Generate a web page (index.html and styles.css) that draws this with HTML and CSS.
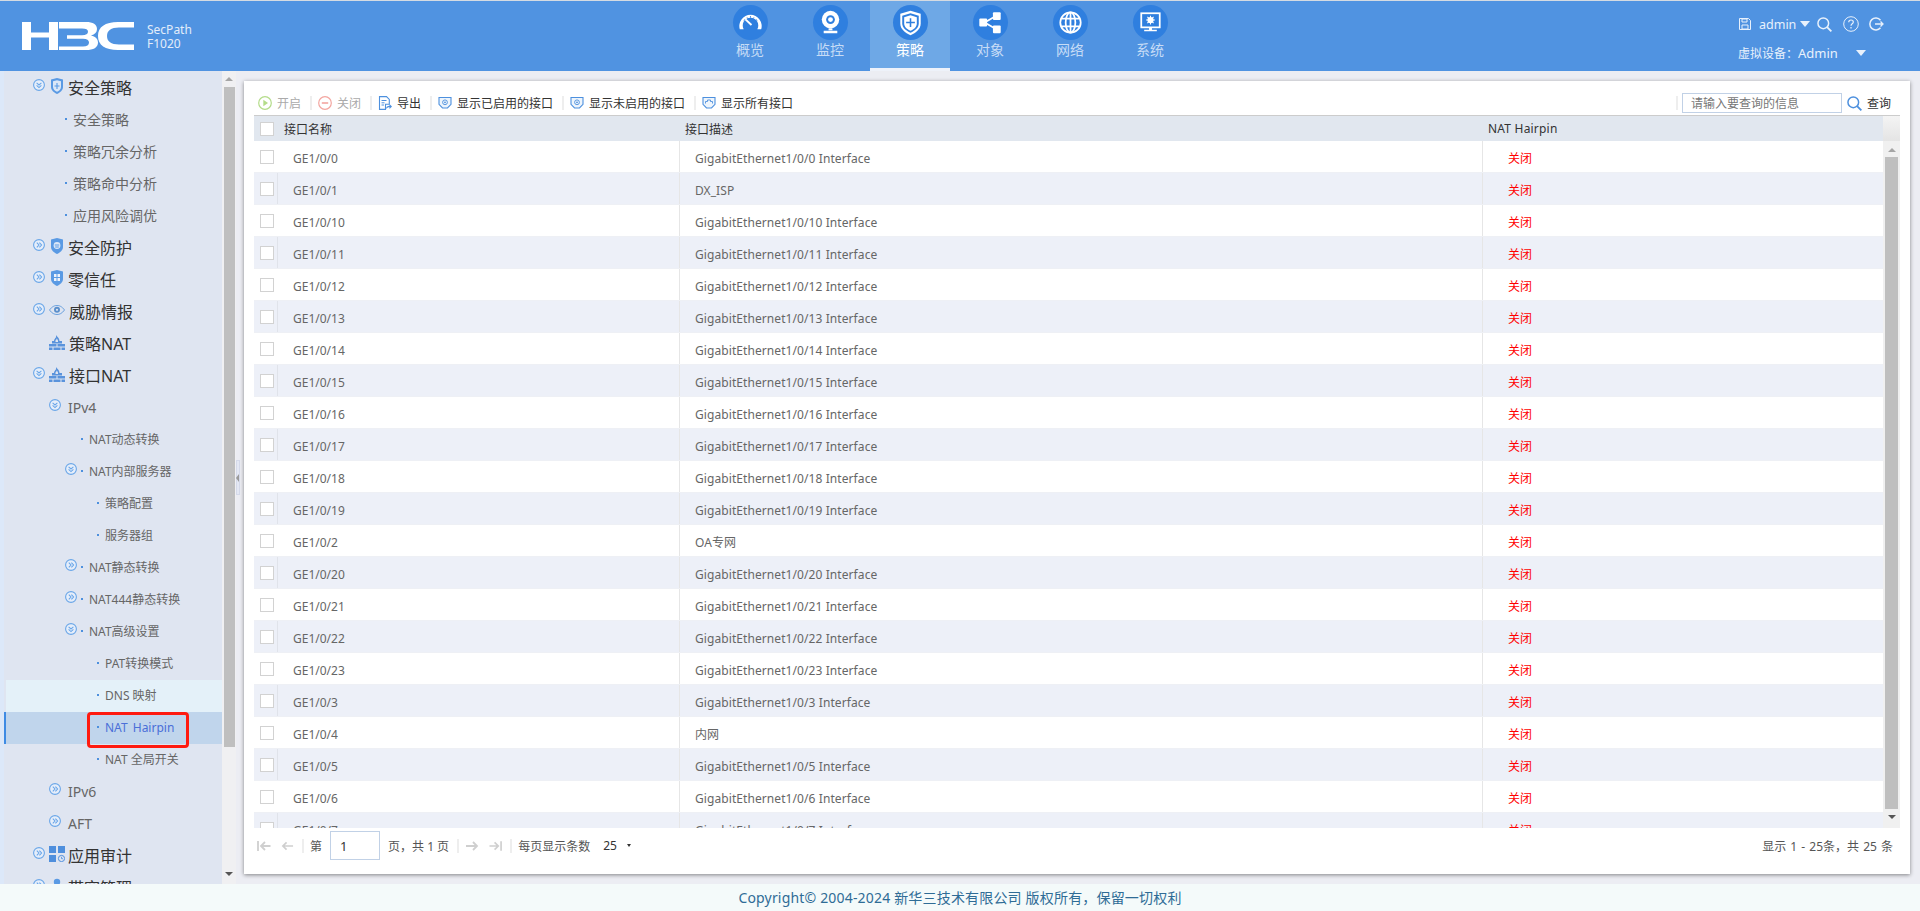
FILE: index.html
```html
<!DOCTYPE html>
<html lang="zh-CN">
<head>
<meta charset="utf-8">
<title>H3C SecPath F1020</title>
<link rel="stylesheet" href="styles.css">
</head>
<body>
<svg class="defs" xmlns="http://www.w3.org/2000/svg">
  <symbol id="down" viewBox="0 0 12 12"><circle cx="6" cy="6" r="5.4" fill="#e6eefa" stroke="#6aa6e8" stroke-width="1.1"/><path d="M3.6 3.8 6 6 8.4 3.8M3.6 6.4 6 8.6 8.4 6.4" fill="none" stroke="#6aa6e8" stroke-width="1.1"/></symbol>
  <symbol id="right" viewBox="0 0 12 12"><circle cx="6" cy="6" r="5.4" fill="#e6eefa" stroke="#6aa6e8" stroke-width="1.1"/><path d="M3.8 3.6 6 6 3.8 8.4M6.4 3.6 8.6 6 6.4 8.4" fill="none" stroke="#6aa6e8" stroke-width="1.1"/></symbol>
  <symbol id="sh-plus" viewBox="0 0 12 16"><path d="M6 0 12 1.6V9c0 3.4-3 5.6-6 7-3-1.4-6-3.6-6-7V1.600z" fill="#5a9ae4"/><path d="M6 2.200 10 3.300V9c0 2.300-2 3.800-4 4.800C4 12.800 2 11.300 2 9V3.300z" fill="#dbe7f7"/><path d="M6 5v6M3.500 8h5" stroke="#5a9ae4" stroke-width="1.100"/></symbol>
  <symbol id="sh-face" viewBox="0 0 12 16"><path d="M6 0 12 1.600V9c0 3.400-3 5.600-6 7-3-1.400-6-3.600-6-7V1.600z" fill="#5a9ae4"/><circle cx="6" cy="7.500" r="3.400" fill="#dbe7f7"/><path d="M3.800 7h4.400M4.200 9h3.600" stroke="#5a9ae4"/></symbol>
  <symbol id="sh-grid" viewBox="0 0 12 16"><path d="M6 0 12 1.600V9c0 3.400-3 5.600-6 7-3-1.400-6-3.600-6-7V1.600z" fill="#5a9ae4"/><path d="M3 4h2.500v3H3zM6.500 4H9v3H6.500zM3 8h2.500v3H3zM6.500 8H9v3H6.500z" fill="#eef3fb"/></symbol>
  <symbol id="eye" viewBox="0 0 16 10"><path d="M.5 5C3 1.500 5.500.5 8 .5s5 1 7.500 4.500C13 8.500 10.500 9.500 8 9.500S3 8.500.5 5z" fill="none" stroke="#6aa0de" stroke-width="1"/><circle cx="8" cy="4.800" r="3" fill="#5b8fcb"/><circle cx="8" cy="4.800" r="1.100" fill="#dfe5f1"/></symbol>
  <symbol id="wall" viewBox="0 0 16 15"><path d="M7 0c1 1.500 3.500 3 3.500 6H13v2.500H3V6h2c0-1.500 1-2 1.200-3C6.800 3.500 7.300 1.500 7 0z" fill="#5a93dc"/><path d="M6.500 5.500c.5-.5 1-1 1.200-2 .8 1 1.300 1.500 1.300 2.500v1H6.500z" fill="#dfe5f1"/><path d="M0 9h7.500v2.600H0zM8.500 9H16v2.600H8.500zM0 12.400h3.500V15H0zM4.500 12.400h7V15h-7zM12.500 12.400H16V15h-3.500z" fill="#5a93dc"/></symbol>
  <symbol id="apps" viewBox="0 0 16 16"><path d="M0 0h7v7H0zM9 0h7v7H9zM0 9h7v7H0z" fill="#4f8fdd"/><circle cx="12.500" cy="12.500" r="3.100" fill="#dfe5f1" stroke="#4f8fdd" stroke-width="1"/><path d="M12.500 10.800v1.900h1.500" fill="none" stroke="#4f8fdd" stroke-width=".8"/></symbol>
  <symbol id="person" viewBox="0 0 12 16"><circle cx="6" cy="4" r="3.200" fill="#5a9ae4"/><path d="M0 15c0-4 2.500-6 6-6s6 2 6 6z" fill="#5a9ae4"/></symbol>
  <symbol id="port" viewBox="0 0 14 14"><path d="M1 1.500h12v6.800L9.500 12h-5L1 8.300z" fill="#eef5fc" stroke="#4d90de" stroke-width="1.100"/><circle cx="7" cy="6.300" r="2.400" fill="none" stroke="#4d90de" stroke-width=".9"/><circle cx="7" cy="6.300" r=".9" fill="#4d90de"/></symbol>
  <symbol id="port-all" viewBox="0 0 14 14"><path d="M1 1.500h12v6.800L9.500 12h-5L1 8.300z" fill="#eef5fc" stroke="#4d90de" stroke-width="1.100"/><path d="M3.500 7.500V5.500h2V4h3v1.500h2v2" fill="none" stroke="#4d90de" stroke-width=".9"/></symbol>
  <symbol id="search" viewBox="0 0 16 16"><circle cx="6.700" cy="6.700" r="5.700" fill="none" stroke="currentColor" stroke-width="1.600"/><path d="m10.800 10.800 4.500 4.500" stroke="currentColor" stroke-width="2"/></symbol>
</svg>

<div class="app">
  <header class="topbar">
    <div class="brand">
      <svg class="logo" viewBox="0 0 112 28" xmlns="http://www.w3.org/2000/svg" aria-label="H3C">
        <path d="M0 0h9v10.500h18V0h9v28h-9V15.500H9V28H0z" fill="#fff"/>
        <path d="M37 0h27c7 0 11 2.500 11 7 0 3-2 5.500-6 6.500 4.500 1 7 3.500 7 7 0 5-4.500 7.500-12 7.500H37v-3.500h24c4 0 6-1.300 6-4 0-2.500-2-3.800-6-3.800H45v-3.500h15c4 0 6-1.200 6-3.400 0-2.200-2-3.300-6-3.300H37z" fill="#fff"/>
        <path d="M112 5.500H97c-8 0-12 3-12 8.500s4 8.500 12 8.500h15V28H96c-13 0-20-5-20-14S83 0 96 0h16z" fill="#fff"/>
      </svg>
      <div class="model"><span>SecPath</span><span>F1020</span></div>
    </div>
    <nav class="nav">
      <a class="nav-item">
        <span class="nav-ico"><svg viewBox="0 0 36 36" xmlns="http://www.w3.org/2000/svg"><path d="M7 25a11.500 11.500 0 1 1 22 0h-4a8 8 0 1 0-14 0z" fill="#fff"/><path d="m12 14 7 6.500" stroke="#fff" stroke-width="2"/><path d="M11 16l1.500-1M14.500 12.800l.8 1.200M18 11.500v1.500M21.500 12.800l-.8 1.200M25 16l-1.500-1" stroke="#2f7fdf"/></svg></span>
        <span class="nav-label">概览</span>
      </a>
      <a class="nav-item">
        <span class="nav-ico"><svg viewBox="0 0 36 36" xmlns="http://www.w3.org/2000/svg"><circle cx="18" cy="15" r="9" fill="#fff"/><circle cx="18" cy="15" r="4.500" fill="#2f7fdf"/><circle cx="18" cy="15" r="2.500" fill="#fff"/><path d="M16 24h4v2h-4zM11 26.500h14V29H11z" fill="#fff"/></svg></span>
        <span class="nav-label">监控</span>
      </a>
      <a class="nav-item active">
        <span class="nav-ico"><svg viewBox="0 0 36 36" xmlns="http://www.w3.org/2000/svg"><path d="M18 6 28.500 9v10c0 6-5 9.500-10.500 12-5.500-2.500-10.500-6-10.500-12V9z" fill="#fff"/><path d="M18 8.500 26.500 11v8c0 4.500-4 7.500-8.500 9.500-4.500-2-8.500-5-8.500-9.500v-8z" fill="#2f7fdf"/><path d="M18 10.500 24.500 12.500v6.500c0 3.500-3 6-6.500 7.500-3.500-1.500-6.500-4-6.500-7.500v-6.500z" fill="#fff"/><path d="M18 13.500v9M13.500 18h9" stroke="#2f7fdf" stroke-width="1.600"/></svg></span>
        <span class="nav-label">策略</span>
      </a>
      <a class="nav-item">
        <span class="nav-ico"><svg viewBox="0 0 36 36" xmlns="http://www.w3.org/2000/svg"><path d="m12 18 12-7M12 18l12 7" stroke="#fff" stroke-width="1.800"/><rect x="6.500" y="14" width="8" height="8" rx="1" fill="#fff"/><rect x="20.500" y="7.500" width="8" height="8" rx="1" fill="#fff"/><rect x="20.500" y="21" width="8" height="8" rx="1" fill="#fff"/></svg></span>
        <span class="nav-label">对象</span>
      </a>
      <a class="nav-item">
        <span class="nav-ico"><svg viewBox="0 0 36 36" xmlns="http://www.w3.org/2000/svg"><g fill="none" stroke="#fff" stroke-width="1.800"><circle cx="18" cy="18" r="10.500"/><ellipse cx="18" cy="18" rx="5" ry="10.500"/><path d="M18 7.500v21M8.500 14h19M8.500 22h19"/></g></svg></span>
        <span class="nav-label">网络</span>
      </a>
      <a class="nav-item">
        <span class="nav-ico"><svg viewBox="0 0 36 36" xmlns="http://www.w3.org/2000/svg"><rect x="8.500" y="8.500" width="19" height="14.500" fill="none" stroke="#fff" stroke-width="1.800"/><circle cx="18" cy="15.500" r="3.200" fill="#fff"/><circle cx="18" cy="15.500" r="1.200" fill="#2f7fdf"/><path d="M18 11v9M13.500 15.500h9M14.800 12.300l6.400 6.400M21.200 12.300l-6.400 6.400" stroke="#fff" stroke-width="1.100"/><path d="M16.500 23h3v2.500h-3zM11.500 25.500h13v1.500h-13z" fill="#fff"/></svg></span>
        <span class="nav-label">系统</span>
      </a>
    </nav>
    <div class="user">
      <div class="user-row">
        <svg class="u-save" viewBox="0 0 12 12" xmlns="http://www.w3.org/2000/svg"><path d="M.5.5h9l2 2v9H.5z" fill="none" stroke="#e8f1fc"/><path d="M3 1h5v3H3zM3 7h6v4H3z" fill="none" stroke="#e8f1fc"/></svg>
        <span class="u-name">admin</span>
        <i class="caret u-caret"></i>
        <svg class="u-search"><use href="#search"/></svg>
        <svg class="u-help" viewBox="0 0 16 16" xmlns="http://www.w3.org/2000/svg"><circle cx="8" cy="8" r="7.300" fill="none" stroke="#e8f1fc" stroke-width="1"/><path d="M5.700 6.200C5.800 4.700 6.800 4 8 4s2.300.8 2.300 2c0 1.800-2.300 1.800-2.300 3.800M8 11v1.500" fill="none" stroke="#e8f1fc" stroke-width="1.200"/></svg>
        <svg class="u-out" viewBox="0 0 16 14" xmlns="http://www.w3.org/2000/svg"><path d="M12.500 3.200A6 6 0 1 0 12.500 10.800" fill="none" stroke="#e8f1fc" stroke-width="1.500"/><path d="M7 7h8M12.500 4.500 15 7l-2.500 2.500" fill="none" stroke="#e8f1fc" stroke-width="1.300"/></svg>
      </div>
      <div class="user-row second">
        <span class="u-vd">虚拟设备：</span><span class="u-adm">Admin</span>
        <i class="caret u-caret2"></i>
      </div>
    </div>
  </header>

  <main class="main">
    <aside class="side">
      <div class="tree">
        <div class="node l1"><svg class="tg"><use href="#down"/></svg><svg class="ic ic-sh"><use href="#sh-plus"/></svg><span>安全策略</span></div>
        <div class="node l2-leaf"><i class="dot"></i><span>安全策略</span></div>
        <div class="node l2-leaf"><i class="dot"></i><span>策略冗余分析</span></div>
        <div class="node l2-leaf"><i class="dot"></i><span>策略命中分析</span></div>
        <div class="node l2-leaf"><i class="dot"></i><span>应用风险调优</span></div>
        <div class="node l1"><svg class="tg"><use href="#right"/></svg><svg class="ic ic-sh"><use href="#sh-face"/></svg><span>安全防护</span></div>
        <div class="node l1"><svg class="tg"><use href="#right"/></svg><svg class="ic ic-sh"><use href="#sh-grid"/></svg><span>零信任</span></div>
        <div class="node l1"><svg class="tg"><use href="#right"/></svg><svg class="ic ic-eye"><use href="#eye"/></svg><span>威胁情报</span></div>
        <div class="node l1 no-tg"><svg class="ic ic-wall"><use href="#wall"/></svg><span>策略NAT</span></div>
        <div class="node l1"><svg class="tg"><use href="#down"/></svg><svg class="ic ic-wall"><use href="#wall"/></svg><span>接口NAT</span></div>
        <div class="node l2"><svg class="tg"><use href="#down"/></svg><span>IPv4</span></div>
        <div class="node l3 no-tg"><i class="dot"></i><span>NAT动态转换</span></div>
        <div class="node l3"><svg class="tg"><use href="#down"/></svg><i class="dot"></i><span>NAT内部服务器</span></div>
        <div class="node l4"><i class="dot"></i><span>策略配置</span></div>
        <div class="node l4"><i class="dot"></i><span>服务器组</span></div>
        <div class="node l3"><svg class="tg"><use href="#right"/></svg><i class="dot"></i><span>NAT静态转换</span></div>
        <div class="node l3"><svg class="tg"><use href="#right"/></svg><i class="dot"></i><span>NAT444静态转换</span></div>
        <div class="node l3"><svg class="tg"><use href="#down"/></svg><i class="dot"></i><span>NAT高级设置</span></div>
        <div class="node l4"><i class="dot"></i><span>PAT转换模式</span></div>
        <div class="node l4 hover"><i class="dot"></i><span>DNS 映射</span></div>
        <div class="node l4 selected"><i class="dot"></i><span>NAT Hairpin</span><b class="mark"></b></div>
        <div class="node l4"><i class="dot"></i><span>NAT 全局开关</span></div>
        <div class="node l2"><svg class="tg"><use href="#right"/></svg><span>IPv6</span></div>
        <div class="node l2"><svg class="tg"><use href="#right"/></svg><span>AFT</span></div>
        <div class="node l1"><svg class="tg"><use href="#right"/></svg><svg class="ic ic-apps"><use href="#apps"/></svg><span>应用审计</span></div>
        <div class="node l1"><svg class="tg"><use href="#right"/></svg><svg class="ic ic-sh"><use href="#person"/></svg><span>带宽管理</span></div>
      </div>
      <div class="side-bar">
        <i class="arr up"></i>
        <i class="side-thumb"></i>
        <i class="arr dn side-dn"></i>
      </div>
      <div class="splitter"><i class="split-handle"></i></div>
    </aside>

    <section class="panel">
      <div class="toolbar">
        <span class="tool off"><svg class="t-ic" viewBox="0 0 14 14" xmlns="http://www.w3.org/2000/svg"><circle cx="7" cy="7" r="6.300" fill="none" stroke="#b4dc8a" stroke-width="1.200"/><path d="M5.300 3.800 10 7l-4.700 3.200z" fill="#b4dc8a"/></svg>开启</span><i class="sep"></i>
        <span class="tool off"><svg class="t-ic" viewBox="0 0 14 14" xmlns="http://www.w3.org/2000/svg"><circle cx="7" cy="7" r="6.300" fill="none" stroke="#f3a6a0" stroke-width="1.200"/><path d="M3.800 7h6.400" stroke="#f3a6a0" stroke-width="1.600"/></svg>关闭</span><i class="sep"></i>
        <span class="tool"><svg class="t-ic" viewBox="0 0 14 14" xmlns="http://www.w3.org/2000/svg"><path d="M1.500.6h7l2.800 2.800v4.800H7.500v5.200h-6z" fill="#fff" stroke="#4d90de" stroke-width="1.100"/><path d="M3.500 4.500h5M3.500 6.800h3M3.500 9h2.500" stroke="#4d90de"/><path d="M8 13c0-2.300 1.500-3.300 3.500-3.300V8L14 10.500 11.500 13v-1.700c-1.500 0-2.500.5-3.500 1.700z" fill="#4d90de"/></svg>导出</span><i class="sep"></i>
        <span class="tool"><svg class="t-ic"><use href="#port"/></svg>显示已启用的接口</span><i class="sep"></i>
        <span class="tool"><svg class="t-ic"><use href="#port"/></svg>显示未启用的接口</span><i class="sep"></i>
        <span class="tool"><svg class="t-ic"><use href="#port-all"/></svg>显示所有接口</span>
        <div class="query">
          <i class="sep"></i>
          <input class="q-input" type="text" placeholder="请输入要查询的信息">
          <svg class="q-ic"><use href="#search"/></svg>
          <span class="q-text">查询</span>
        </div>
      </div>

      <div class="grid">
        <div class="grid-head">
          <div class="head-cols">
            <span class="c-check"><i class="box"></i></span>
            <span class="c-name">接口名称</span>
            <span class="c-desc">接口描述</span>
            <span class="c-nat">NAT Hairpin</span>
          </div>
          <div class="head-corner"></div>
        </div>
        <div class="grid-body">
          <div class="rows">
            <div class="row"><span class="c-check"><i class="box"></i></span><span class="c-name">GE1/0/0</span><span class="c-desc">GigabitEthernet1/0/0 Interface</span><span class="c-nat">关闭</span></div>
            <div class="row"><span class="c-check"><i class="box"></i></span><span class="c-name">GE1/0/1</span><span class="c-desc">DX_ISP</span><span class="c-nat">关闭</span></div>
            <div class="row"><span class="c-check"><i class="box"></i></span><span class="c-name">GE1/0/10</span><span class="c-desc">GigabitEthernet1/0/10 Interface</span><span class="c-nat">关闭</span></div>
            <div class="row"><span class="c-check"><i class="box"></i></span><span class="c-name">GE1/0/11</span><span class="c-desc">GigabitEthernet1/0/11 Interface</span><span class="c-nat">关闭</span></div>
            <div class="row"><span class="c-check"><i class="box"></i></span><span class="c-name">GE1/0/12</span><span class="c-desc">GigabitEthernet1/0/12 Interface</span><span class="c-nat">关闭</span></div>
            <div class="row"><span class="c-check"><i class="box"></i></span><span class="c-name">GE1/0/13</span><span class="c-desc">GigabitEthernet1/0/13 Interface</span><span class="c-nat">关闭</span></div>
            <div class="row"><span class="c-check"><i class="box"></i></span><span class="c-name">GE1/0/14</span><span class="c-desc">GigabitEthernet1/0/14 Interface</span><span class="c-nat">关闭</span></div>
            <div class="row"><span class="c-check"><i class="box"></i></span><span class="c-name">GE1/0/15</span><span class="c-desc">GigabitEthernet1/0/15 Interface</span><span class="c-nat">关闭</span></div>
            <div class="row"><span class="c-check"><i class="box"></i></span><span class="c-name">GE1/0/16</span><span class="c-desc">GigabitEthernet1/0/16 Interface</span><span class="c-nat">关闭</span></div>
            <div class="row"><span class="c-check"><i class="box"></i></span><span class="c-name">GE1/0/17</span><span class="c-desc">GigabitEthernet1/0/17 Interface</span><span class="c-nat">关闭</span></div>
            <div class="row"><span class="c-check"><i class="box"></i></span><span class="c-name">GE1/0/18</span><span class="c-desc">GigabitEthernet1/0/18 Interface</span><span class="c-nat">关闭</span></div>
            <div class="row"><span class="c-check"><i class="box"></i></span><span class="c-name">GE1/0/19</span><span class="c-desc">GigabitEthernet1/0/19 Interface</span><span class="c-nat">关闭</span></div>
            <div class="row"><span class="c-check"><i class="box"></i></span><span class="c-name">GE1/0/2</span><span class="c-desc">OA专网</span><span class="c-nat">关闭</span></div>
            <div class="row"><span class="c-check"><i class="box"></i></span><span class="c-name">GE1/0/20</span><span class="c-desc">GigabitEthernet1/0/20 Interface</span><span class="c-nat">关闭</span></div>
            <div class="row"><span class="c-check"><i class="box"></i></span><span class="c-name">GE1/0/21</span><span class="c-desc">GigabitEthernet1/0/21 Interface</span><span class="c-nat">关闭</span></div>
            <div class="row"><span class="c-check"><i class="box"></i></span><span class="c-name">GE1/0/22</span><span class="c-desc">GigabitEthernet1/0/22 Interface</span><span class="c-nat">关闭</span></div>
            <div class="row"><span class="c-check"><i class="box"></i></span><span class="c-name">GE1/0/23</span><span class="c-desc">GigabitEthernet1/0/23 Interface</span><span class="c-nat">关闭</span></div>
            <div class="row"><span class="c-check"><i class="box"></i></span><span class="c-name">GE1/0/3</span><span class="c-desc">GigabitEthernet1/0/3 Interface</span><span class="c-nat">关闭</span></div>
            <div class="row"><span class="c-check"><i class="box"></i></span><span class="c-name">GE1/0/4</span><span class="c-desc">内网</span><span class="c-nat">关闭</span></div>
            <div class="row"><span class="c-check"><i class="box"></i></span><span class="c-name">GE1/0/5</span><span class="c-desc">GigabitEthernet1/0/5 Interface</span><span class="c-nat">关闭</span></div>
            <div class="row"><span class="c-check"><i class="box"></i></span><span class="c-name">GE1/0/6</span><span class="c-desc">GigabitEthernet1/0/6 Interface</span><span class="c-nat">关闭</span></div>
            <div class="row"><span class="c-check"><i class="box"></i></span><span class="c-name">GE1/0/7</span><span class="c-desc">GigabitEthernet1/0/7 Interface</span><span class="c-nat">关闭</span></div>
          </div>
          <div class="grid-bar">
            <i class="arr up"></i>
            <i class="grid-thumb"></i>
            <i class="arr dn grid-dn"></i>
          </div>
        </div>
      </div>

      <div class="pager">
        <svg class="p-ic" viewBox="0 0 14 12" xmlns="http://www.w3.org/2000/svg"><path d="M1 1v10M13.500 6H4M8 2 4 6l4 4" fill="none" stroke="#cfcfcf" stroke-width="1.800"/></svg>
        <svg class="p-ic p-prev" viewBox="0 0 14 12" xmlns="http://www.w3.org/2000/svg"><path d="M13 6H2M6 2 2 6l4 4" fill="none" stroke="#cfcfcf" stroke-width="1.800"/></svg>
        <i class="sep"></i>
        <span class="p-t">第</span>
        <input class="p-input" type="text" value="1">
        <span class="p-t">页，共 1 页</span>
        <i class="sep"></i>
        <svg class="p-ic" viewBox="0 0 14 12" xmlns="http://www.w3.org/2000/svg"><path d="M1 6h11M8 2l4 4-4 4" fill="none" stroke="#cfcfcf" stroke-width="1.800"/></svg>
        <svg class="p-ic p-prev" viewBox="0 0 14 12" xmlns="http://www.w3.org/2000/svg"><path d="M13 1v10M.5 6H10M6 2l4 4-4 4" fill="none" stroke="#cfcfcf" stroke-width="1.800"/></svg>
        <i class="sep"></i>
        <span class="p-t">每页显示条数</span>
        <span class="p-size">25</span>
        <i class="p-caret"></i>
        <span class="p-total">显示 1 - 25条，共 25 条</span>
      </div>
    </section>
  </main>

  <footer class="footer">Copyright© 2004-2024 新华三技术有限公司 版权所有，保留一切权利</footer>
</div>
</body>
</html>
```

FILE: styles.css
```css
* { box-sizing: border-box; }
html, body { margin: 0; padding: 0; height: 100%; }
body {
  font-family: "Noto Sans", "Noto Sans CJK SC", sans-serif;
  font-size: 12px;
  color: #666;
  background: #ecedf3;
  overflow: hidden;
}
.defs { display: none; }
i { display: block; font-style: normal; }

.app { height: 911px; display: flex; flex-direction: column; border-top: 1px solid #d5dbe2; }

/* top bar */
.topbar { height: 70px; flex: none; display: flex; background: #5093e1; color: #e8f1fc; }
.brand { width: 710px; flex: none; display: flex; align-items: flex-start; padding: 21px 0 0 22px; }
.logo { width: 112px; height: 28px; flex: none; }
.model { margin: 1px 0 0 13px; display: flex; flex-direction: column; font-size: 12px; line-height: 14px; color: #e3edfa; }
.nav { display: flex; width: 480px; flex: none; }
.nav-item { width: 80px; height: 70px; display: flex; flex-direction: column; align-items: center; padding-top: 4px; color: #c6dcf6; font-size: 14px; }
.nav-ico { width: 35px; height: 35px; border-radius: 50%; background: #2f7fdf; display: block; }
.nav-ico svg { width: 35px; height: 35px; display: block; }
.nav-label { line-height: 18px; margin-top: 1px; }
.nav-item.active { background: #6ea8e6; color: #fff; border-bottom: 3px solid #eef2fa; }
.user { margin-left: auto; width: 182px; flex: none; }
.user-row { display: flex; align-items: center; height: 16px; margin-top: 15px; }
.user-row.second { margin-top: 12px; height: 18px; }
.u-save { width: 12px; height: 12px; flex: none; margin-left: 1px; }
.u-name { margin-left: 8px; font-size: 12.500px; width: 37px; }
.caret { width: 0; height: 0; border-left: 5.500px solid transparent; border-right: 5.500px solid transparent; border-top: 6px solid #e8f1fc; }
.u-caret { margin-left: 4px; }
.u-search { width: 15px; height: 15px; margin-left: 7px; color: #e8f1fc; }
.u-help { width: 16px; height: 16px; margin-left: 11px; }
.u-out { width: 16px; height: 14px; margin-left: 9px; }
.u-vd { font-size: 12px; width: 60px; }
.u-adm { font-size: 13px; width: 58px; }

/* main */
.main { flex: 1; min-height: 0; display: flex; }

.side { width: 244px; flex: none; display: flex; height: 100%; }
.tree { width: 222px; flex: none; height: 100%; overflow: hidden; background: #dfe5f1; border-left: 4px solid #dce8f9; padding-top: 1px; }
.node { height: 32px; display: flex; align-items: center; position: relative; color: #666; margin-left: -4px; }
.node span { margin-bottom: 2px; }
.tg { width: 12px; height: 12px; flex: none; margin-bottom: 6px; }
.dot { width: 2px; height: 2px; background: #4d90de; flex: none; margin-bottom: 2px; }
.ic { flex: none; }
.ic-sh { width: 12px; height: 16px; margin: 0 5px 4px 6px; }
.ic-eye { width: 16px; height: 10px; margin: 0 4px 4px 4px; }
.ic-wall { width: 16px; height: 15px; margin: 0 4px 4px 4px; }
.ic-apps { width: 16px; height: 16px; margin: 0 3px 4px 4px; }
.l1 { padding-left: 33px; font-size: 16px; color: #333; }
.l1.no-tg { padding-left: 45px; }
.l2 { padding-left: 49px; font-size: 14px; }
.l2 .tg { margin-right: 7px; }
.l2-leaf { padding-left: 65px; font-size: 14px; }
.l2-leaf .dot { margin-right: 6px; }
.l3 { padding-left: 65px; font-size: 12px; }
.l3 .tg { margin-right: 4px; }
.l3 .dot { margin-right: 6px; }
.l3.no-tg { padding-left: 81px; }
.l4 { padding-left: 97px; font-size: 12px; }
.l4 .dot { margin-right: 6px; }
.node.hover { background: #e4f1f9; margin-left: 2px; padding-left: 91px; }
.node.selected { background: #c0d5ec; color: #4a6fd8; margin-left: 0; padding-left: 91px; border-left: 2px solid #3f8be3; word-spacing: 2px; }
.mark { position: absolute; left: 81px; top: 0; width: 102px; height: 36px; border: 3px solid #ff1a10; border-radius: 4px; }

.side-bar { width: 14px; flex: none; height: 100%; background: #f0f0f2; display: flex; flex-direction: column; align-items: center; padding-top: 6px; }
.arr { width: 0; height: 0; border-left: 4px solid transparent; border-right: 4px solid transparent; flex: none; }
.arr.up { border-bottom: 4px solid #a5a5a5; }
.arr.dn { border-top: 4px solid #555; }
.side-thumb { width: 11px; height: 660px; background: #bfbfbf; margin: 6px 0 0 1px; }
.side-dn { margin-top: 125px; }
.splitter { width: 8px; flex: none; display: flex; align-items: center; }
.split-handle { width: 4px; height: 35px; background: #e4e8f4; border: 1px solid #d5daea; display: flex; align-items: center; }
.split-handle::before { content: ""; width: 0; height: 0; margin-left: -1px; border-top: 4px solid transparent; border-bottom: 4px solid transparent; border-right: 3px solid #9a9a9a; }

/* panel */
.panel { flex: 1; min-width: 0; margin: 10px 10px 10px 0; background: #fff; box-shadow: 0 1px 4px rgba(0, 0, 0, .45); padding: 0 10px; display: flex; flex-direction: column; }

.toolbar { height: 34px; flex: none; display: flex; align-items: center; padding: 10px 0 0 4px; color: #333; }
.tool { display: flex; align-items: center; color: #333; white-space: nowrap; }
.tool.off { color: #aaa; }
.t-ic { width: 14px; height: 14px; margin-right: 5px; flex: none; }
.sep { width: 2px; height: 14px; background: #eee; margin: 0 6px 0 9px; flex: none; }
.query { margin-left: auto; display: flex; align-items: center; margin-right: 9px; }
.query .sep { margin: 0 4px 0 0; }
.q-input { width: 160px; height: 20px; border: 1px solid #c1d1e6; padding: 0 8px; font: 12px "Noto Sans", "Noto Sans CJK SC", sans-serif; color: #333; outline: none; }
.q-input::placeholder { color: #777; }
.q-ic { width: 15px; height: 15px; margin-left: 5px; color: #4d90de; }
.q-text { margin-left: 5px; color: #333; }

.grid { flex: none; border-top: 1px solid #ccc; }
.grid-head { height: 25px; display: flex; }
.head-cols { flex: 1; min-width: 0; display: flex; align-items: center; background: #e1e7ef; color: #333; }
.head-corner { width: 17px; flex: none; background: linear-gradient(#f4f4f4, #e4e4e4); }
.grid-body { height: 687px; display: flex; }
.rows { flex: 1; min-width: 0; overflow: hidden; }
.row { height: 32px; display: flex; align-items: stretch; color: #666; border-bottom: 1px solid #eef0f5; overflow: hidden; }
.row:nth-child(even) { background: #edf0f8; }
.c-check { width: 24px; flex: none; display: flex; align-items: center; padding-left: 6px; }
.box { width: 14px; height: 14px; background: #fff; border: 1px solid #d2d2d2; }
.c-name { width: 401px; flex: none; }
.c-desc { width: 803px; flex: none; }
.row .c-check { padding-top: 1px; }
.row:nth-child(even) .c-check { border-right: 1px solid #e0e3ea; }
.row .c-name { padding-left: 15px; line-height: 35px; }
.row .c-desc { padding-left: 15px; line-height: 35px; border-left: 1px solid #e6e6e6; letter-spacing: .08px; }
.row .c-nat { padding-left: 25px; line-height: 35px; color: #f00; border-left: 1px solid #e6e6e6; }
.head-cols .c-name { padding-left: 6px; }
.head-cols .c-desc { padding-left: 6px; }
.head-cols .c-nat { padding-left: 6px; letter-spacing: .2px; }
.head-cols .c-check { height: 100%; }
.grid-bar { width: 17px; flex: none; background: #f0f0f0; display: flex; flex-direction: column; align-items: center; padding-top: 7px; }
.grid-thumb { width: 13px; height: 652px; background: #bfbfbf; margin-top: 5px; }
.grid-dn { margin-top: 6px; }

.pager { flex: none; height: 29px; margin-top: 3px; display: flex; align-items: center; padding-left: 3px; color: #555; }
.p-ic { width: 14px; height: 12px; flex: none; }
.p-ic.p-prev { width: 13px; margin-left: 10px; }
.pager .sep { margin: 0 6px 0 8px; }
.p-input { width: 50px; height: 29px; border: 1px solid #c1d1e6; margin: 0 8px; padding: 0 0 0 9px; font: 13px "Noto Sans", sans-serif; color: #333; outline: none; }
.p-size { margin-left: 13px; color: #333; }
.p-caret { width: 0; height: 0; margin-left: 10px; border-left: 2.500px solid transparent; border-right: 2.500px solid transparent; border-top: 3px solid #333; }
.p-total { margin-left: auto; margin-right: 7px; word-spacing: 1px; }

.footer { height: 27px; flex: none; background: #f4fafa; color: #2f6c96; font-size: 14px; line-height: 27px; text-align: center; letter-spacing: .18px; }
```
